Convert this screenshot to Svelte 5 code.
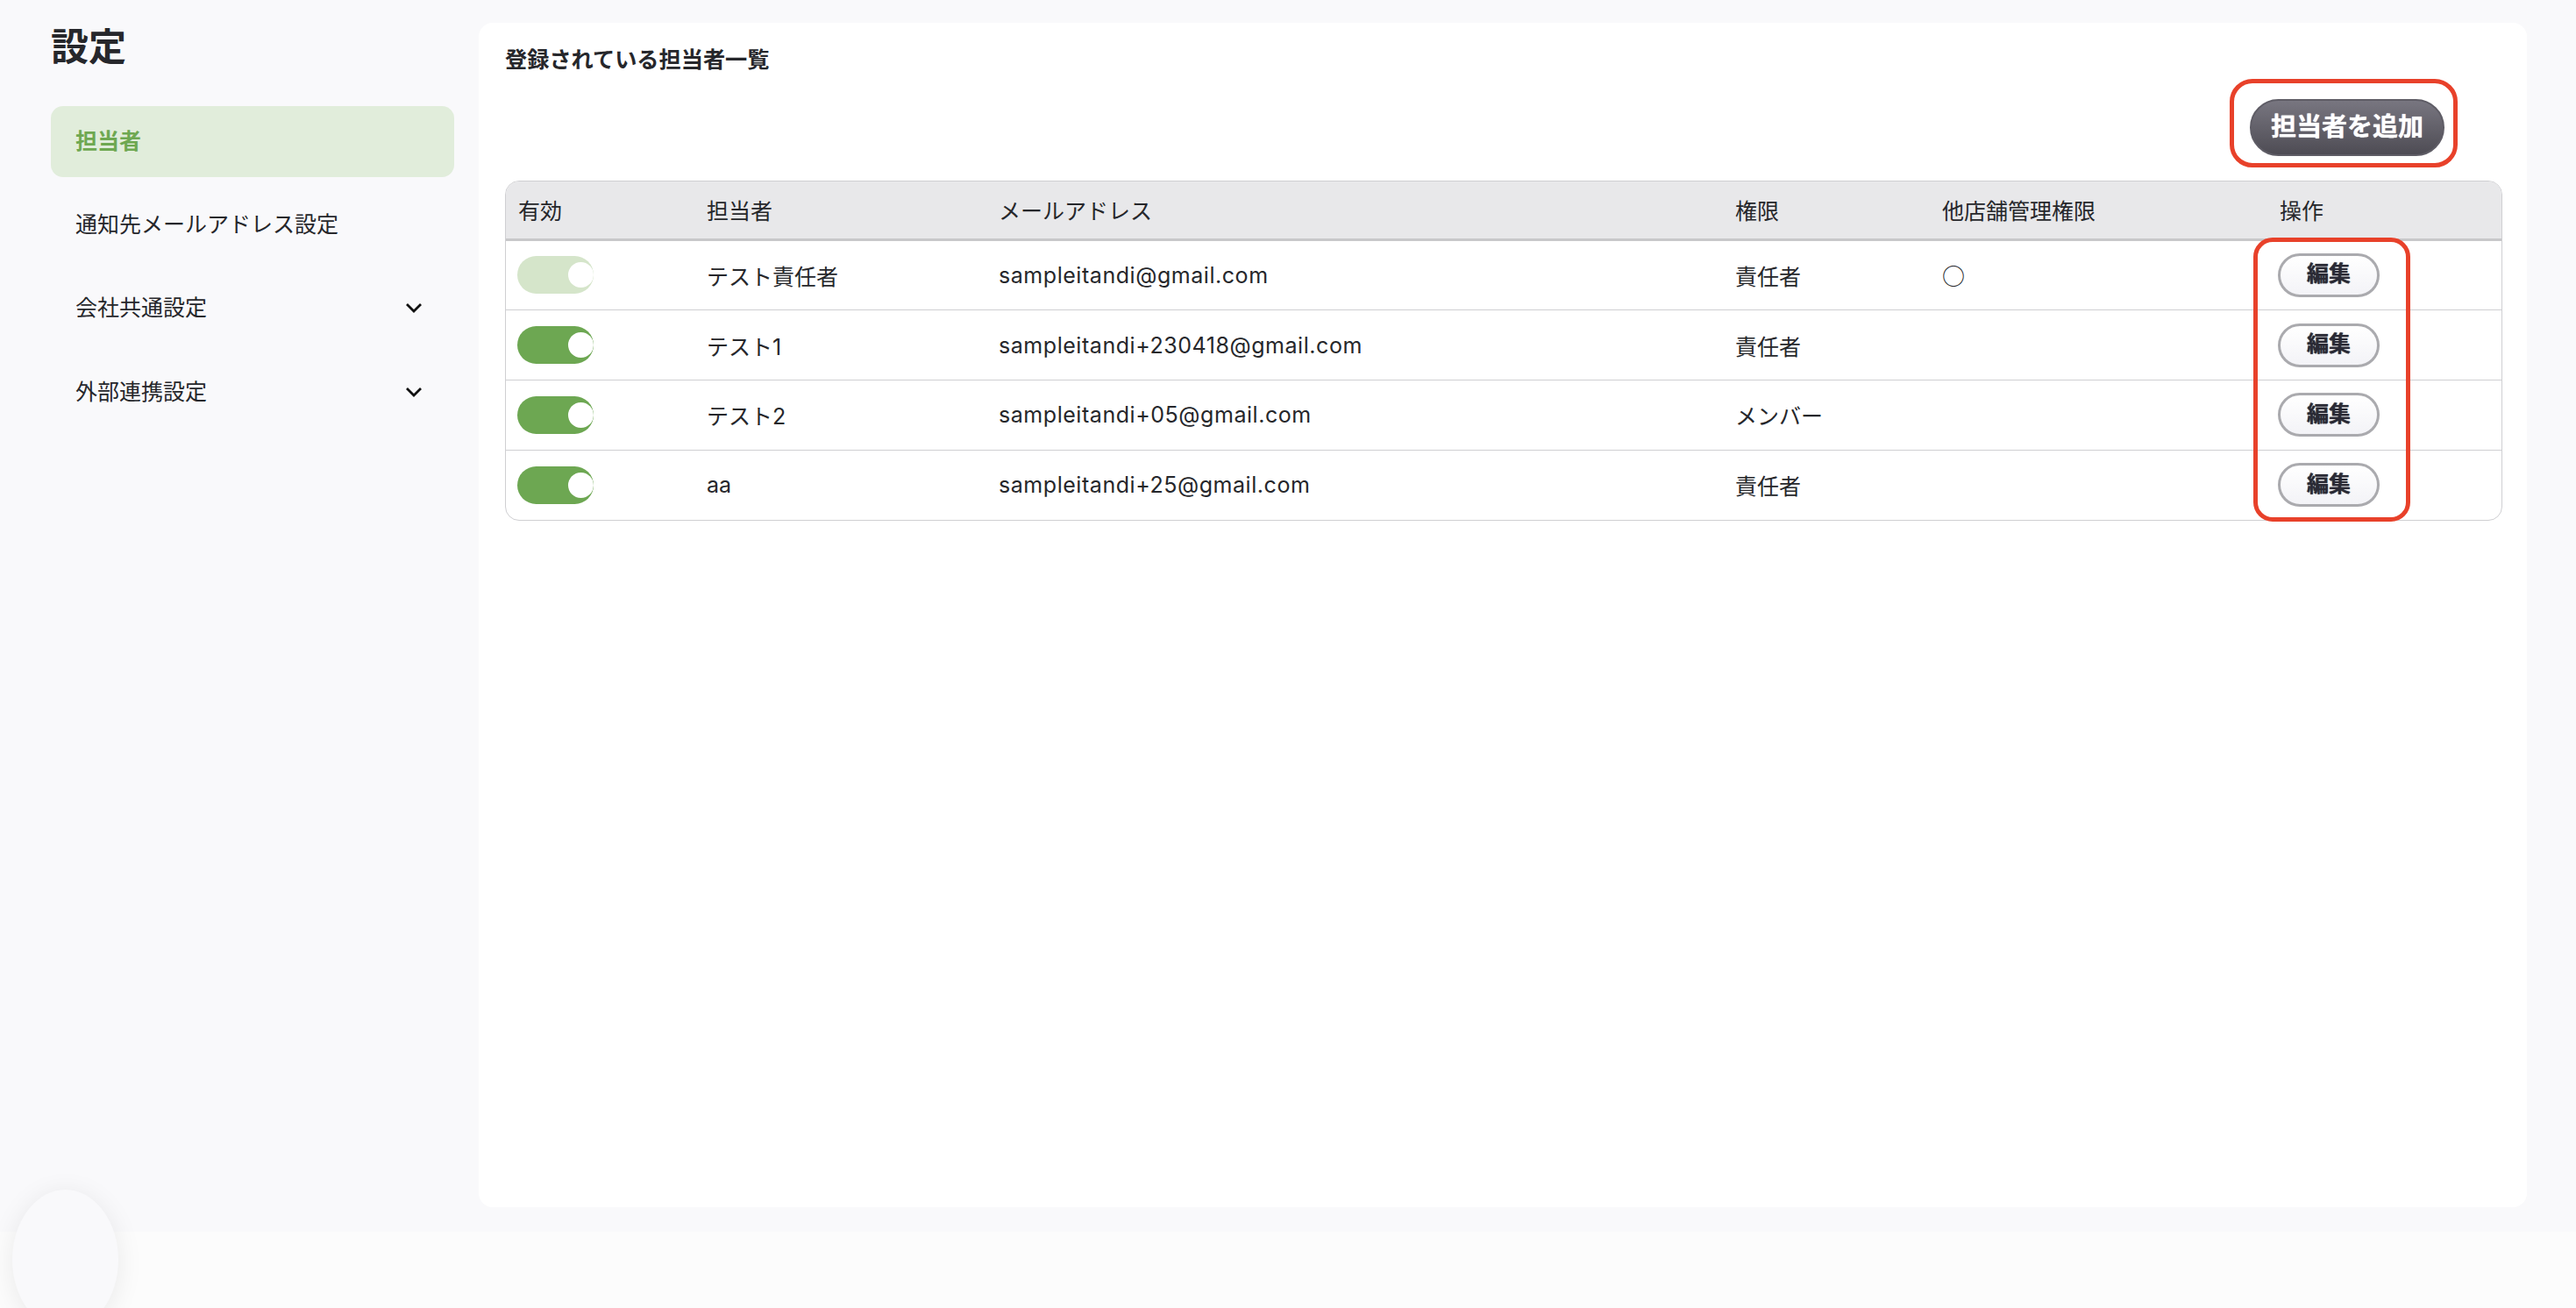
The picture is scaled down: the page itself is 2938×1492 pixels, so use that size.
<script>
  const staff = [
    { on: true, locked: true, name: 'テスト責任者', mail: 'sampleitandi@gmail.com', role: '責任者', other: '○' },
    { on: true, name: 'テスト1', mail: 'sampleitandi+230418@gmail.com', role: '責任者', other: '' },
    { on: true, name: 'テスト2', mail: 'sampleitandi+05@gmail.com', role: 'メンバー', other: '' },
    { on: true, name: 'aa', mail: 'sampleitandi+25@gmail.com', role: '責任者', other: '' }
  ];
  const menu = [
    { label: '担当者', active: true },
    { label: '通知先メールアドレス設定' },
    { label: '会社共通設定', sub: true },
    { label: '外部連携設定', sub: true }
  ];
</script>

<div class="page">
  <div class="main">
    <aside class="side">
      <h1>設定</h1>
      <nav>
        {#each menu as item}
          <div class="nav-item" class:active={item.active}>
            <span>{item.label}</span>
            {#if item.sub}
              <svg width="20" height="13" viewBox="0 0 20 13" fill="none">
                <path d="M2 2l8 8 8-8" stroke="#111" stroke-width="2.8" />
              </svg>
            {/if}
          </div>
        {/each}
      </nav>
    </aside>

    <section class="card">
      <h2>登録されている担当者一覧</h2>
      <div class="actions">
        <button class="add">担当者を追加</button>
      </div>
      <div class="table-wrap">
        <table>
          <colgroup>
            <col style="width:215px" />
            <col style="width:333px" />
            <col style="width:840px" />
            <col style="width:236px" />
            <col style="width:385px" />
            <col />
          </colgroup>
          <thead>
            <tr>
              <th>有効</th>
              <th>担当者</th>
              <th>メールアドレス</th>
              <th>権限</th>
              <th>他店舗管理権限</th>
              <th>操作</th>
            </tr>
          </thead>
          <tbody>
            {#each staff as row}
              <tr>
                <td>
                  <span class="toggle" class:locked={row.locked}><span class="knob"></span></span>
                </td>
                <td>{row.name}</td>
                <td class="mail">{row.mail}</td>
                <td>{row.role}</td>
                <td class="other">{row.other}</td>
                <td><button class="edit">編集</button></td>
              </tr>
            {/each}
          </tbody>
        </table>
      </div>
    </section>
  </div>
  <footer></footer>

  <!-- annotation frames from the screenshot -->
  <div class="mark mark-add"></div>
  <div class="mark mark-edit"></div>
  <div class="bubble"></div>
</div>

<style>
  :global(body) {
    margin: 0;
    background: #f9f9fb;
  }
  .page {
    position: relative;
    height: 1492px;
    overflow: hidden;
    font-family: Inter, "Noto Sans CJK JP", sans-serif;
    font-size: 25px;
    color: #26272b;
    background: #f9f9fb;
  }
  .main {
    display: flex;
    height: 1405px;
    box-sizing: border-box;
    padding: 26px 56px 28px 58px;
    gap: 28px;
  }
  .side {
    width: 460px;
    flex: none;
  }
  h1 {
    margin: 0;
    font-size: 43px;
    line-height: 54px;
    font-weight: 700;
  }
  nav {
    margin-top: 41px;
    display: flex;
    flex-direction: column;
    gap: 14.2px;
  }
  .nav-item {
    height: 81px;
    box-sizing: border-box;
    padding: 0 36px 0 28px;
    border-radius: 14px;
    display: flex;
    align-items: center;
    justify-content: space-between;
    line-height: 1;
  }
  .nav-item.active {
    background: #e1eddb;
    color: #6ea851;
    font-weight: 700;
  }
  .card {
    flex: 1;
    background: #fff;
    border-radius: 16px;
    padding: 26px 28px 0 30px;
    box-sizing: border-box;
  }
  h2 {
    margin: 0;
    font-size: 25.2px;
    line-height: 32px;
    font-weight: 700;
  }
  .actions {
    display: flex;
    justify-content: flex-end;
    padding: 29px 66px 28px 0;
  }
  button {
    font-family: inherit;
    cursor: pointer;
  }
  .add {
    width: 222px;
    height: 65px;
    padding: 0 0 3px;
    border: 2px solid #5f5d66;
    border-radius: 33px;
    background: linear-gradient(#787680, #4e4c54);
    color: #fff;
    font-size: 29px;
    font-weight: 700;
    line-height: 1;
    text-shadow: 0 0 1px #fff;
  }
  .table-wrap {
    border: 1.5px solid #cfcfd2;
    border-radius: 16px;
    overflow: hidden;
  }
  table {
    width: 100%;
    border-collapse: collapse;
    table-layout: fixed;
  }
  th {
    height: 64.5px;
    padding: 0 0 0 14px;
    background: #e8e8ea;
    border-bottom: 3px solid #c8c8ca;
    text-align: left;
    font-weight: 400;
  }
  td {
    height: 78.75px;
    padding: 0 0 0 14px;
    border-bottom: 1.5px solid #cfcfd2;
  }
  tr:last-child td {
    border-bottom: 0;
  }
  .mail {
    letter-spacing: 0.55px;
  }
  .other {
    font-family: "Noto Sans CJK JP", sans-serif;
    font-size: 26px;
  }
  .toggle {
    display: block;
    position: relative;
    width: 87px;
    height: 43px;
    margin-left: -1px;
    border-radius: 22px;
    background: #6da752;
    overflow: hidden;
  }
  .toggle.locked {
    background: #d5e5ca;
  }
  .knob {
    position: absolute;
    top: 7px;
    right: 0;
    width: 29px;
    height: 29px;
    border-radius: 50%;
    background: #fff;
  }
  .edit {
    display: block;
    width: 116px;
    height: 50px;
    margin-left: -2px;
    padding: 0 0 2px;
    border: 3px solid #aaaaae;
    border-radius: 25px;
    background: linear-gradient(#fff, #f3f3f7);
    color: #2a2a35;
    font-size: 25px;
    font-weight: 700;
    line-height: 1;
    text-shadow: 0 0 1px #2a2a35;
  }
  footer {
    height: 87px;
    background: #fcfcfc;
  }
  .mark {
    position: absolute;
    box-sizing: border-box;
    border: 5px solid #e8412a;
  }
  .mark-add {
    left: 2543px;
    top: 90px;
    width: 260px;
    height: 101px;
    border-radius: 26px;
  }
  .mark-edit {
    left: 2570px;
    top: 271px;
    width: 179px;
    height: 324px;
    border-radius: 22px;
  }
  .bubble {
    position: absolute;
    left: 14px;
    top: 1357px;
    width: 121px;
    height: 160px;
    border-radius: 50%;
    background: #f9f9fb;
    box-shadow: 0 4px 30px rgba(0, 0, 0, 0.08);
  }
</style>
